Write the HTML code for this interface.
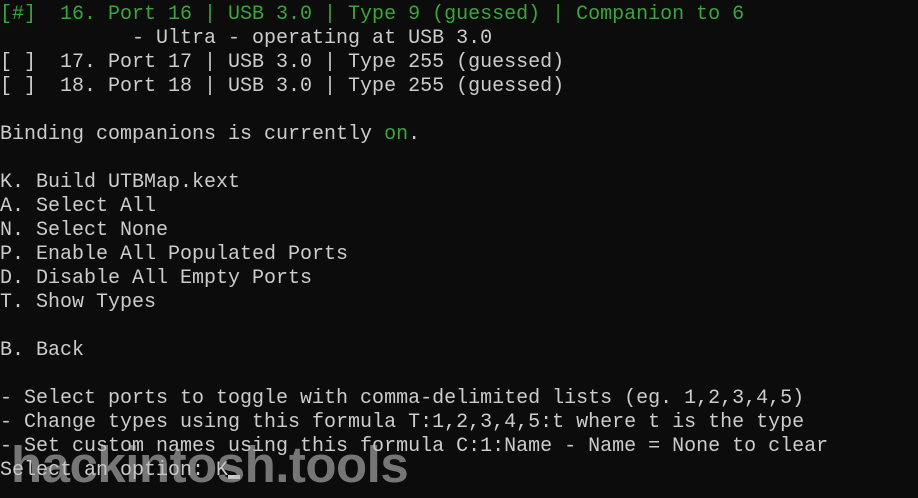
<!DOCTYPE html>
<html><head><meta charset="utf-8"><style>
html,body{margin:0;padding:0;background:#0c0c0c;width:918px;height:498px;overflow:hidden;position:relative}
pre{margin:0;position:absolute;left:0;top:3px;font-family:"Liberation Mono",monospace;font-size:20px;line-height:24px;color:#cccccc;white-space:pre}
.g{color:#3aa53a}
.wm{position:absolute;left:11px;top:436px;font-family:"Liberation Sans",sans-serif;font-weight:bold;font-size:51px;line-height:58px;color:rgba(190,190,190,0.6);letter-spacing:-0.5px}
.cur{display:inline-block;width:12px;height:4px;background:#ccc;vertical-align:-4px}
</style></head><body>
<pre><span class="g">[#]  16. Port 16 | USB 3.0 | Type 9 (guessed) | Companion to 6</span>
           - Ultra - operating at USB 3.0
[ ]  17. Port 17 | USB 3.0 | Type 255 (guessed)
[ ]  18. Port 18 | USB 3.0 | Type 255 (guessed)

Binding companions is currently <span class="g">on</span>.

K. Build UTBMap.kext
A. Select All
N. Select None
P. Enable All Populated Ports
D. Disable All Empty Ports
T. Show Types

B. Back

- Select ports to toggle with comma-delimited lists (eg. 1,2,3,4,5)
- Change types using this formula T:1,2,3,4,5:t where t is the type
- Set custom names using this formula C:1:Name - Name = None to clear
Select an option: K<span class="cur"></span></pre>
<div class="wm">hackintosh.tools</div>
</body></html>
